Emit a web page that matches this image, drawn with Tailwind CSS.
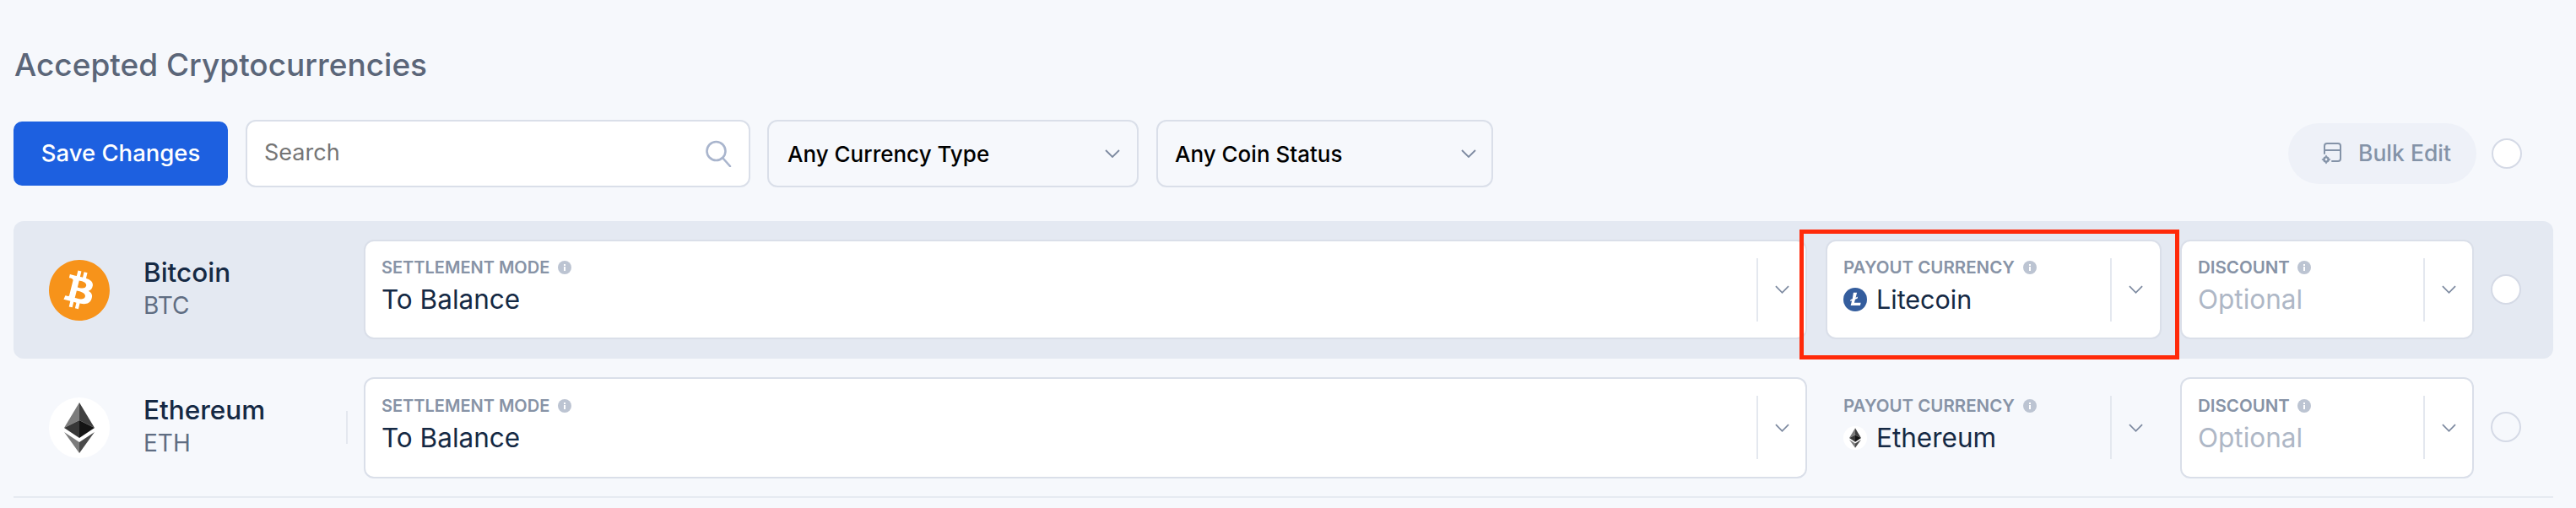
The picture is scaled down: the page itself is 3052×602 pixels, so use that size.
<!doctype html>
<html lang="en">
  <head>
    <meta charset="UTF-8" />
    <title>Accepted Cryptocurrencies</title>
    <script src="https://cdn.jsdelivr.net/npm/@tailwindcss/browser@4"></script>
  </head>
  <body class="bg-[#f6f8fc] font-[family-name:Inter,sans-serif]">
    <main class="relative w-[3052px] h-[602px] overflow-hidden pl-4 pr-[27px] pt-[57px]">
      <h2 class="h-[40px] pl-px text-[37px] leading-[40px] font-medium text-[#5b6679]">Accepted Cryptocurrencies</h2>

      <!-- Toolbar -->
      <div class="mt-[45px] h-[80px] flex items-center">
        <button class="w-[254px] h-[76px] rounded-[10px] bg-[#1d60e0] text-white text-[27.5px] font-medium">Save Changes</button>
        <div class="ml-[21px] w-[598px] h-[80px] flex items-center justify-between pl-[20px] pr-[20px] bg-white rounded-[12px] border-2 border-[#dadfe9]">
          <span class="text-[27px] text-[#757575] -mt-[2px]">Search</span>
          <svg class="w-[32px] h-[32px]" viewBox="0 0 32 32" fill="none" stroke="#a9b5cd" stroke-width="2.6" stroke-linecap="round">
            <circle cx="13.5" cy="13" r="11" />
            <path d="M22 22l8 9" />
          </svg>
        </div>
        <div class="ml-[20px] w-[440px] h-[80px] flex items-center justify-between pl-[22px] pr-[20px] rounded-[12px] border-2 border-[#dadfe9]">
          <span class="text-[26px] font-medium text-black">Any Currency Type</span>
          <svg class="w-[18px] h-[10px]" viewBox="0 0 18 10" fill="none" stroke="#7d8aa0" stroke-width="1.8"><path d="M1 1l8 8 8-8" /></svg>
        </div>
        <div class="ml-[21px] w-[399px] h-[80px] flex items-center justify-between pl-[20px] pr-[18px] rounded-[12px] border-2 border-[#dadfe9]">
          <span class="text-[26px] font-medium text-black">Any Coin Status</span>
          <svg class="w-[18px] h-[10px]" viewBox="0 0 18 10" fill="none" stroke="#7d8aa0" stroke-width="1.8"><path d="M1 1l8 8 8-8" /></svg>
        </div>
        <button class="ml-auto w-[223px] h-[72px] rounded-full bg-[#eef1f8] flex items-center pl-[39px] gap-[18px] text-[26.5px] font-medium text-[#8493a8]">
          <svg class="w-[26px] h-[26px]" viewBox="0 0 26 26" fill="none" stroke="#8493a8" stroke-width="2" stroke-linecap="round">
            <path d="M4 13V4a3 3 0 0 1 3-3h13a3 3 0 0 1 3 3v15a3 3 0 0 1-3 3h-7" />
            <path d="M4 9h19" />
            <circle cx="6" cy="20" r="2.6" stroke-width="2.4" />
            <path d="M6 15.5v1.5M6 23v1.5M1.5 20h1.5M9 20h1.5" stroke-width="1.6" />
          </svg>
          <span>Bulk Edit</span>
        </button>
        <span class="ml-[18px] mr-[37px] w-[36px] h-[36px] rounded-full bg-white border-2 border-[#d5dae6]"></span>
      </div>

      <!-- Bitcoin row -->
      <div class="mt-[40px] h-[163px] flex items-center rounded-[12px] bg-[#e4e9f2] pl-[42px]">
        <svg class="w-[72px] h-[72px] shrink-0" viewBox="0 0 24 24">
          <circle cx="12" cy="12" r="8" fill="#fff" />
          <path fill="#f7931a" d="M23.638 14.904c-1.602 6.43-8.113 10.34-14.542 8.736C2.67 22.05-1.244 15.525.362 9.105 1.962 2.67 8.475-1.243 14.9.358c6.43 1.605 10.342 8.115 8.738 14.548v-.002zm-6.35-4.613c.24-1.59-.974-2.45-2.64-3.03l.54-2.153-1.315-.33-.525 2.107c-.345-.087-.705-.167-1.064-.25l.526-2.127-1.32-.33-.54 2.165c-.285-.067-.565-.132-.84-.2l-1.815-.45-.35 1.407s.975.225.955.236c.535.136.63.486.615.766l-1.477 5.92c-.075.166-.24.406-.614.314.015.02-.96-.24-.96-.24l-.66 1.51 1.71.426.93.242-.54 2.19 1.32.327.54-2.17c.36.1.705.19 1.05.273l-.51 2.154 1.32.33.545-2.19c2.24.427 3.93.257 4.64-1.774.57-1.637-.03-2.58-1.217-3.196.854-.193 1.5-.76 1.68-1.93h.01zm-3.01 4.22c-.404 1.64-3.157.75-4.05.53l.72-2.9c.896.23 3.757.67 3.33 2.37zm.41-4.24c-.37 1.49-2.662.735-3.405.55l.654-2.64c.744.18 3.137.524 2.75 2.084v.006z" />
        </svg>
        <div class="ml-[40px] -mt-[3px] w-[261px] shrink-0 flex flex-col">
          <span class="text-[31.5px] leading-[40px] font-medium text-[#152944]">Bitcoin</span>
          <span class="text-[28px] leading-[38px] text-[#5f6d82]">BTC</span>
        </div>
        <div class="w-[1710px] h-[118px] shrink-0 flex bg-white rounded-[12px] border-2 border-[#dadfe9] -mt-[1px]">
          <div class="flex-1 pl-[19px] pt-[19px]">
            <div class="flex items-center gap-[10px] h-[24px]">
              <span class="text-[20px] leading-[24px] font-semibold text-[#8793a6]">SETTLEMENT MODE</span>
              <svg class="w-[16px] h-[16px]" viewBox="0 0 16 16"><circle cx="8" cy="8" r="8" fill="#bcc4d2" /><path d="M7 7h2v5H7zM7 4h2v2H7z" fill="#fff" /></svg>
            </div>
            <div class="mt-[6px] text-[31.5px] leading-[40px] text-[#152944]">To Balance</div>
          </div>
          <div class="my-auto w-[2px] h-[75px] bg-[#e4e8ef]"></div>
          <div class="w-[56px] flex items-center justify-center">
            <svg class="w-[17px] h-[10px]" viewBox="0 0 18 10" fill="none" stroke="#7d8aa0" stroke-width="1.8"><path d="M1 1l8 8 8-8" /></svg>
          </div>
        </div>
        <div class="ml-[22px] w-[398px] h-[118px] shrink-0 flex bg-white rounded-[12px] border-2 border-[#dadfe9] -mt-[1px]">
          <div class="flex-1 pl-[19px] pt-[19px]">
            <div class="flex items-center gap-[10px] h-[24px]">
              <span class="text-[20.5px] leading-[24px] font-semibold text-[#8793a6]">PAYOUT CURRENCY</span>
              <svg class="w-[16px] h-[16px]" viewBox="0 0 16 16"><circle cx="8" cy="8" r="8" fill="#bcc4d2" /><path d="M7 7h2v5H7zM7 4h2v2H7z" fill="#fff" /></svg>
            </div>
            <div class="mt-[6px] flex items-center gap-[11px] text-[30.5px] leading-[40px] text-[#152944]">
              <svg class="w-[28px] h-[28px]" viewBox="0 0 24 24"><circle cx="12" cy="12" r="12" fill="#345d9d" /><path fill="#fff" d="M10.2 5h3.6l-1.3 5 2.2-.9-.5 1.8-2.2.9-.9 3.4h6.6l-.6 2.8H7.4l1.3-5-1.8.7.5-1.7 1.8-.7z" /></svg>
              <span>Litecoin</span>
            </div>
          </div>
          <div class="my-auto w-[2px] h-[75px] bg-[#e4e8ef]"></div>
          <div class="w-[57px] flex items-center justify-center">
            <svg class="w-[17px] h-[10px]" viewBox="0 0 18 10" fill="none" stroke="#7d8aa0" stroke-width="1.8"><path d="M1 1l8 8 8-8" /></svg>
          </div>
        </div>
        <div class="ml-[22px] w-[348px] h-[118px] shrink-0 flex bg-white rounded-[12px] border-2 border-[#dadfe9] -mt-[1px]">
          <div class="flex-1 pl-[19px] pt-[19px]">
            <div class="flex items-center gap-[9px] h-[24px]">
              <span class="text-[20.5px] leading-[24px] font-semibold text-[#8793a6]">DISCOUNT</span>
              <svg class="w-[16px] h-[16px]" viewBox="0 0 16 16"><circle cx="8" cy="8" r="8" fill="#bcc4d2" /><path d="M7 7h2v5H7zM7 4h2v2H7z" fill="#fff" /></svg>
            </div>
            <div class="mt-[6px] text-[31.5px] leading-[40px] text-[#aeb7c6]">Optional</div>
          </div>
          <div class="my-auto w-[2px] h-[75px] bg-[#e4e8ef]"></div>
          <div class="w-[56px] flex items-center justify-center">
            <svg class="w-[17px] h-[10px]" viewBox="0 0 18 10" fill="none" stroke="#7d8aa0" stroke-width="1.8"><path d="M1 1l8 8 8-8" /></svg>
          </div>
        </div>
        <span class="ml-[20px] w-[36px] h-[36px] rounded-full bg-white border-2 border-[#d5dae6] -mt-[2px]"></span>
      </div>

      <!-- Ethereum row -->
      <div class="h-[165px] flex items-center border-b-2 border-[#e6eaf1] pl-[42px]">
        <svg class="w-[72px] h-[72px] shrink-0" viewBox="0 0 72 72">
          <circle cx="36" cy="36" r="36" fill="#fff" />
          <path fill="#7c7c7c" d="M36 6L18 36l18-9z" />
          <path fill="#404040" d="M36 6l18 30-18-9z" />
          <path fill="#383838" d="M36 27L18 36l18 12z" />
          <path fill="#141414" d="M36 27l18 9-18 12z" />
          <path fill="#7c7c7c" d="M18 41l18 25V53z" />
          <path fill="#4a4a4a" d="M54 41L36 66V53z" />
        </svg>
        <div class="ml-[40px] -mt-[3px] w-[240px] shrink-0 flex flex-col">
          <span class="text-[31.5px] leading-[40px] font-medium text-[#152944]">Ethereum</span>
          <span class="text-[28px] leading-[38px] text-[#5f6d82]">ETH</span>
        </div>
        <div class="w-[2px] h-[39px] bg-[#e4e8ef] mr-[19px]"></div>
        <div class="w-[1710px] h-[120px] shrink-0 flex bg-white rounded-[12px] border-2 border-[#dadfe9]">
          <div class="flex-1 pl-[19px] pt-[20px]">
            <div class="flex items-center gap-[10px] h-[24px]">
              <span class="text-[20px] leading-[24px] font-semibold text-[#8793a6]">SETTLEMENT MODE</span>
              <svg class="w-[16px] h-[16px]" viewBox="0 0 16 16"><circle cx="8" cy="8" r="8" fill="#bcc4d2" /><path d="M7 7h2v5H7zM7 4h2v2H7z" fill="#fff" /></svg>
            </div>
            <div class="mt-[6px] text-[31.5px] leading-[40px] text-[#152944]">To Balance</div>
          </div>
          <div class="my-auto w-[2px] h-[75px] bg-[#e4e8ef]"></div>
          <div class="w-[56px] flex items-center justify-center">
            <svg class="w-[17px] h-[10px]" viewBox="0 0 18 10" fill="none" stroke="#7d8aa0" stroke-width="1.8"><path d="M1 1l8 8 8-8" /></svg>
          </div>
        </div>
        <div class="ml-[22px] w-[398px] h-[120px] shrink-0 flex border-2 border-transparent">
          <div class="flex-1 pl-[19px] pt-[20px]">
            <div class="flex items-center gap-[10px] h-[24px]">
              <span class="text-[20.5px] leading-[24px] font-semibold text-[#8793a6]">PAYOUT CURRENCY</span>
              <svg class="w-[16px] h-[16px]" viewBox="0 0 16 16"><circle cx="8" cy="8" r="8" fill="#bcc4d2" /><path d="M7 7h2v5H7zM7 4h2v2H7z" fill="#fff" /></svg>
            </div>
            <div class="mt-[6px] flex items-center gap-[11px] text-[31.5px] leading-[40px] text-[#152944]">
              <svg class="w-[28px] h-[28px]" viewBox="0 0 72 72">
                <circle cx="36" cy="36" r="36" fill="#fff" />
                <path fill="#7c7c7c" d="M36 6L18 36l18-9z" />
                <path fill="#404040" d="M36 6l18 30-18-9z" />
                <path fill="#383838" d="M36 27L18 36l18 12z" />
                <path fill="#141414" d="M36 27l18 9-18 12z" />
                <path fill="#7c7c7c" d="M18 41l18 25V53z" />
                <path fill="#4a4a4a" d="M54 41L36 66V53z" />
              </svg>
              <span>Ethereum</span>
            </div>
          </div>
          <div class="my-auto w-[2px] h-[75px] bg-[#e4e8ef]"></div>
          <div class="w-[57px] flex items-center justify-center">
            <svg class="w-[17px] h-[10px]" viewBox="0 0 18 10" fill="none" stroke="#7d8aa0" stroke-width="1.8"><path d="M1 1l8 8 8-8" /></svg>
          </div>
        </div>
        <div class="ml-[22px] w-[348px] h-[120px] shrink-0 flex bg-white rounded-[12px] border-2 border-[#dadfe9]">
          <div class="flex-1 pl-[19px] pt-[20px]">
            <div class="flex items-center gap-[9px] h-[24px]">
              <span class="text-[20.5px] leading-[24px] font-semibold text-[#8793a6]">DISCOUNT</span>
              <svg class="w-[16px] h-[16px]" viewBox="0 0 16 16"><circle cx="8" cy="8" r="8" fill="#bcc4d2" /><path d="M7 7h2v5H7zM7 4h2v2H7z" fill="#fff" /></svg>
            </div>
            <div class="mt-[6px] text-[31.5px] leading-[40px] text-[#aeb7c6]">Optional</div>
          </div>
          <div class="my-auto w-[2px] h-[75px] bg-[#e4e8ef]"></div>
          <div class="w-[56px] flex items-center justify-center">
            <svg class="w-[17px] h-[10px]" viewBox="0 0 18 10" fill="none" stroke="#7d8aa0" stroke-width="1.8"><path d="M1 1l8 8 8-8" /></svg>
          </div>
        </div>
        <span class="ml-[20px] w-[36px] h-[36px] rounded-full bg-[#f6f8fc] border-2 border-[#d5dae6] -mt-[2px]"></span>
      </div>

      <!-- Highlight annotation -->
      <div class="absolute left-[2132px] top-[272px] w-[450px] h-[154px] border-[5px] border-[#ff2a0a]"></div>
    </main>
  </body>
</html>
